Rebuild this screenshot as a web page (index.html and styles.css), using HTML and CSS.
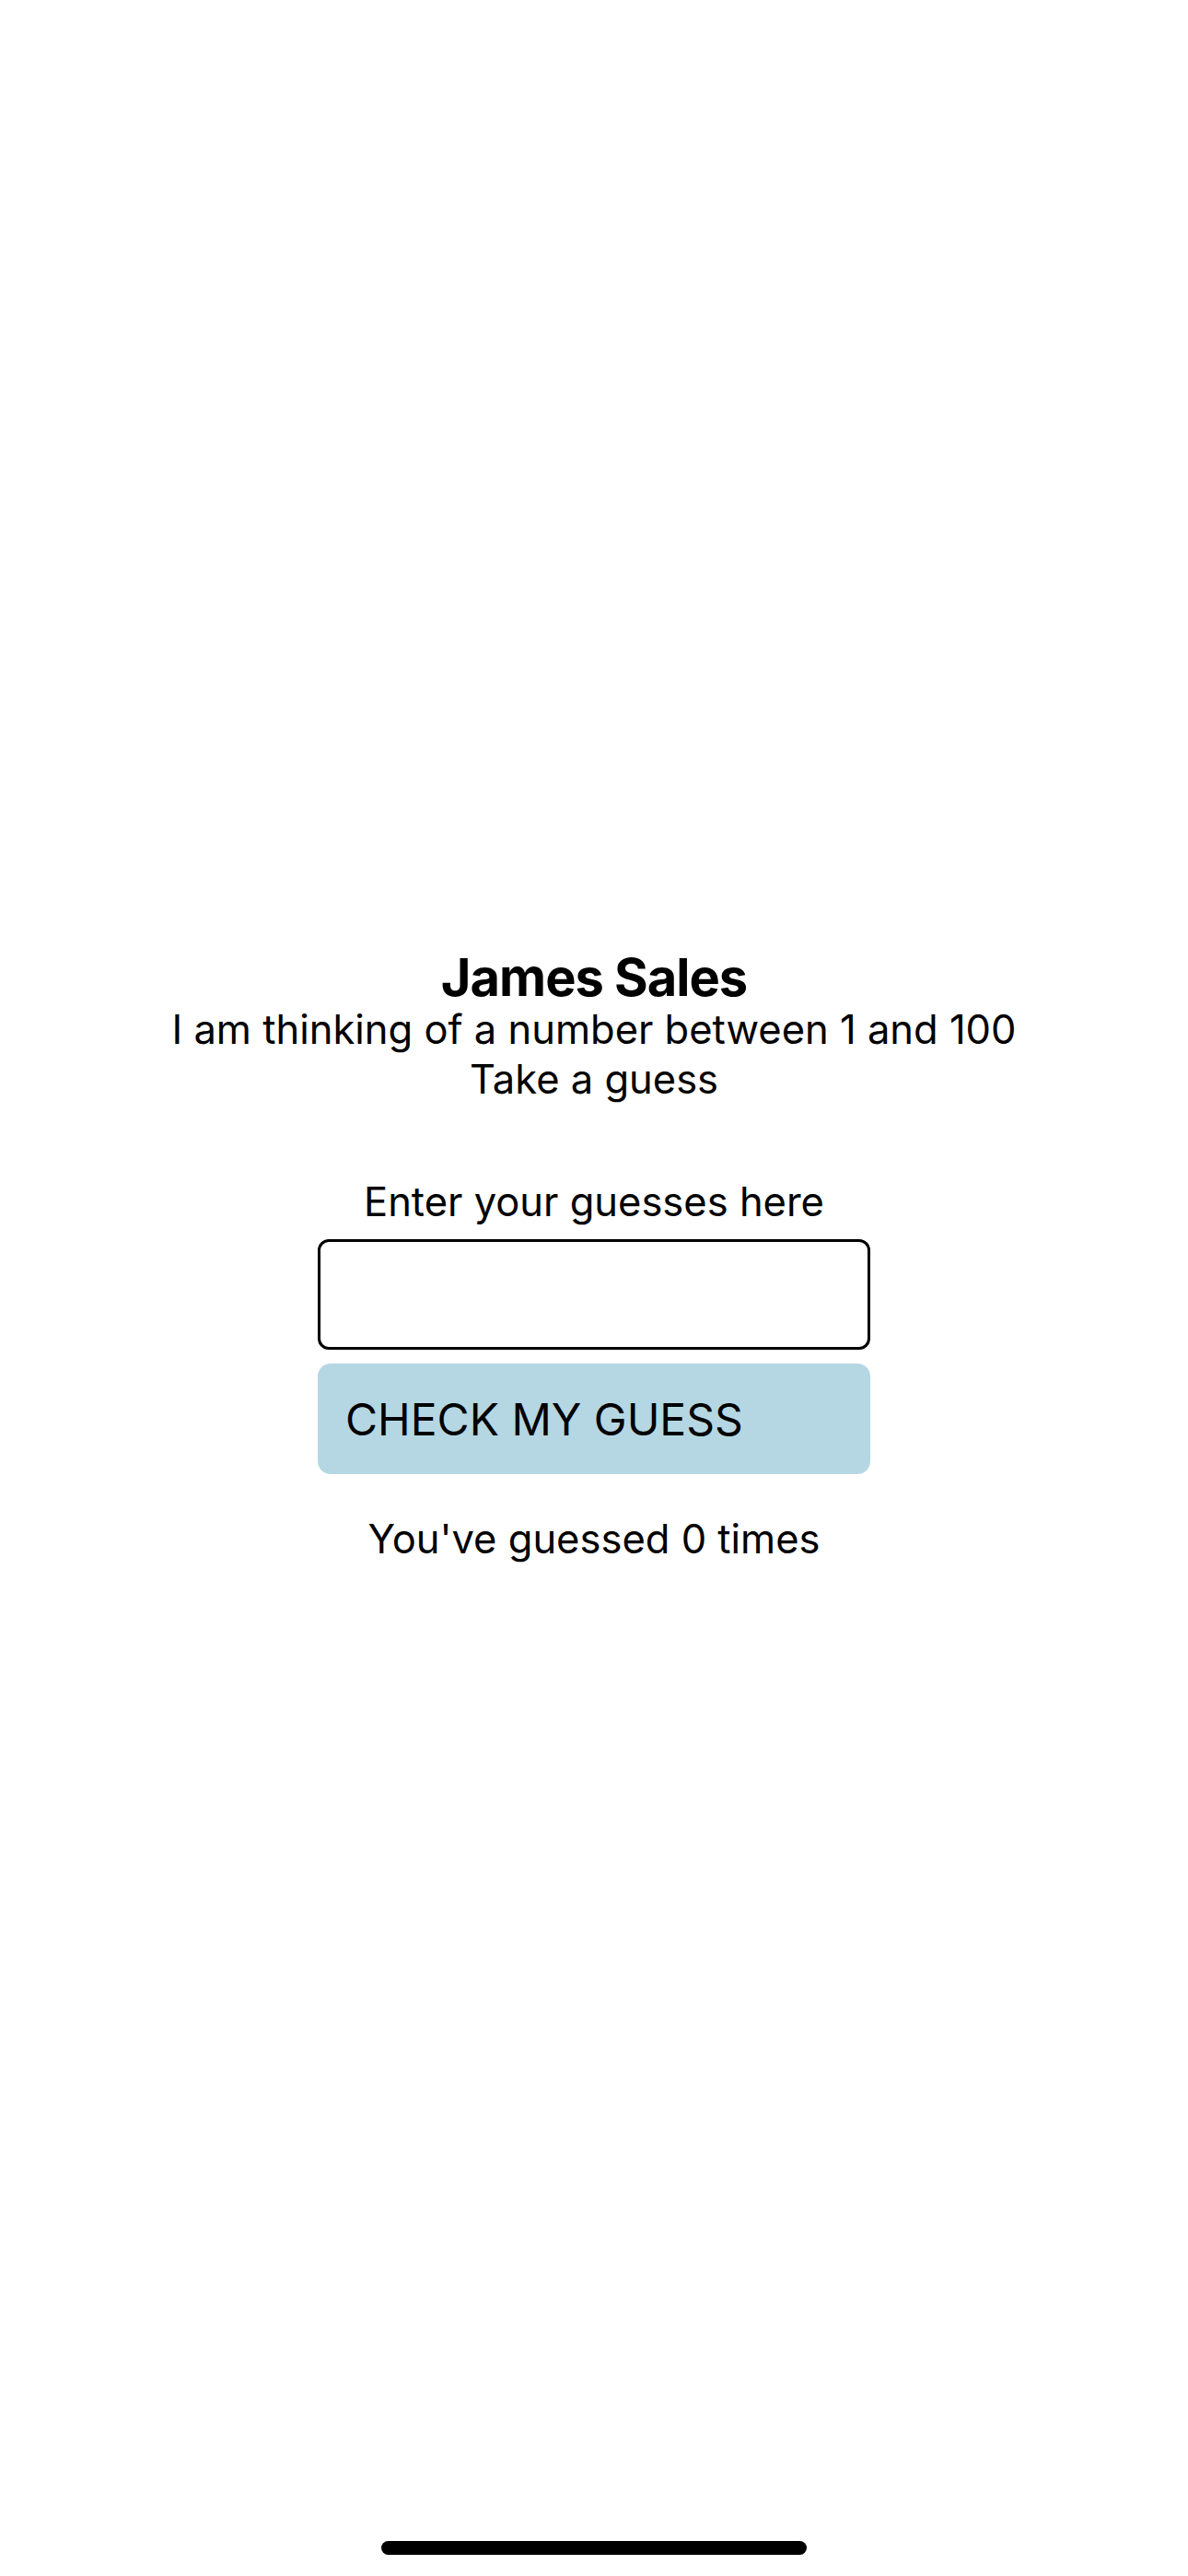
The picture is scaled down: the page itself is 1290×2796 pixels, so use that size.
FILE: index.html
```html
<!DOCTYPE html>
<html lang="en">
<head>
<meta charset="utf-8">
<title>Guess the number</title>
<link rel="stylesheet" href="styles.css">
</head>
<body>
<main class="page">
  <h1 class="title">James Sales</h1>
  <p class="line">I am thinking of a number between 1 and 100</p>
  <p class="line">Take a guess</p>
  <label class="label" for="guess">Enter your guesses here</label>
  <input class="field" id="guess" type="text">
  <button class="btn" type="button">CHECK MY GUESS</button>
  <p class="count">You've guessed 0 times</p>
</main>
<div class="home-indicator"></div>
</body>
</html>
```

FILE: styles.css
```css
html, body {
  margin: 0;
  padding: 0;
  background: #ffffff;
}
body {
  width: 1290px;
  height: 2796px;
  position: relative;
  overflow: hidden;
  font-family: Inter, "Liberation Sans", sans-serif;
  color: #000;
}
.page {
  display: flex;
  flex-direction: column;
  align-items: center;
  padding-top: 1032px;
}
.title {
  margin: 0;
  font-size: 56px;
  line-height: 58px;
  font-weight: 700;
  letter-spacing: -1px;
}
.line {
  margin: 0;
  font-size: 43.5px;
  line-height: 54px;
  font-weight: 400;
}
.label {
  margin-top: 79px;
  font-size: 43.5px;
  line-height: 54px;
}
.field {
  box-sizing: border-box;
  margin-top: 14px;
  width: 600px;
  height: 120px;
  border: 3px solid #000;
  border-radius: 12px;
  background: #fff;
  outline: none;
  padding: 0 20px;
  font-size: 44px;
  font-family: inherit;
}
.btn {
  box-sizing: border-box;
  margin-top: 15px;
  width: 600px;
  height: 120px;
  border: none;
  border-radius: 14px;
  background: #b5d7e3;
  color: #000;
  text-align: left;
  padding: 0 0 0 30px;
  font-family: inherit;
  font-size: 48px;
  font-weight: 400;
}
.count {
  margin: 43px 0 0 0;
  font-size: 43.5px;
  line-height: 54px;
}
.home-indicator {
  position: absolute;
  left: 414px;
  top: 2758px;
  width: 462px;
  height: 15px;
  border-radius: 8px;
  background: #000;
}
```
